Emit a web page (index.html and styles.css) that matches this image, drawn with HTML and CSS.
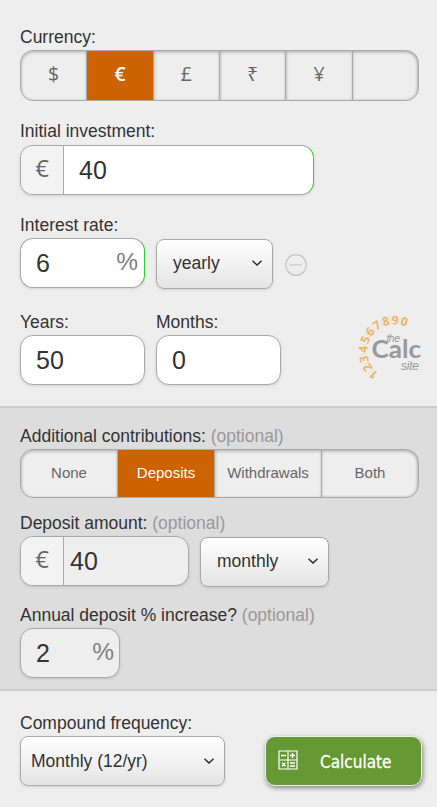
FILE: index.html
```html
<!DOCTYPE html>
<html lang="en">
<head>
  <meta charset="UTF-8" />
  <meta name="viewport" content="width=device-width, initial-scale=1.0"/>
  <title>Compound Interest Calculator</title>
  <link rel="stylesheet" href="styles.css">
</head>
<body>

<form class="calculator">

  <!-- Main figures -->
  <section class="panel panel-main">
    <div class="field currency-field">
      <div class="label">Currency:</div>
      <div class="switch currency">
        <button type="button">$</button>
        <button type="button" class="active">€</button>
        <button type="button">£</button>
        <button type="button">₹</button>
        <button type="button">¥</button>
        <button type="button"></button>
      </div>
    </div>

    <div class="field initial-field">
      <label class="label" for="initial">Initial investment:</label>
      <div class="input-box valid initial">
        <span class="prefix">€</span>
        <input id="initial" type="text" value="40">
      </div>
    </div>

    <div class="field rate-field">
      <label class="label" for="rate">Interest rate:</label>
      <div class="row">
        <div class="input-box valid rate">
          <input id="rate" type="text" value="6">
          <span class="suffix">%</span>
        </div>
        <div class="select-box rate-period">
          <span>yearly</span>
          <svg class="chevron" viewBox="0 0 12 8"><path d="M1.5 1.7 L6 6 L10.5 1.7"/></svg>
        </div>
        <svg class="minus" viewBox="0 0 22 22"><circle cx="11" cy="11" r="10.3"/><path d="M4.5 11 H16.5"/></svg>
      </div>
    </div>

    <div class="row length-row">
      <div class="field">
        <label class="label" for="years">Years:</label>
        <div class="input-box years"><input id="years" type="text" value="50"></div>
      </div>
      <div class="field">
        <label class="label" for="months">Months:</label>
        <div class="input-box months"><input id="months" type="text" value="0"></div>
      </div>
      <svg class="logo" viewBox="8 8 66 68">
        <g class="logo-digits" transform="translate(44.6 47.5)">
          <text transform="rotate(-138)" y="-27.3">1</text>
          <text transform="rotate(-121)" y="-27.3">2</text>
          <text transform="rotate(-104)" y="-27.3">3</text>
          <text transform="rotate(-86)" y="-27.3">4</text>
          <text transform="rotate(-68)" y="-27.3">5</text>
          <text transform="rotate(-51)" y="-27.3">6</text>
          <text transform="rotate(-34)" y="-27.3">7</text>
          <text transform="rotate(-16)" y="-27.3">8</text>
          <text transform="rotate(1)" y="-27.3">9</text>
          <text transform="rotate(18)" y="-27.3">0</text>
        </g>
        <g class="logo-ticks" transform="translate(44.6 47.5)">
          <path transform="rotate(-129.5)" d="M0 -27 V-35"/>
          <path transform="rotate(-112.5)" d="M0 -27 V-35"/>
          <path transform="rotate(-95)" d="M0 -27 V-35"/>
          <path transform="rotate(-77)" d="M0 -27 V-35"/>
          <path transform="rotate(-59.5)" d="M0 -27 V-35"/>
          <path transform="rotate(-42.5)" d="M0 -27 V-35"/>
          <path transform="rotate(-25)" d="M0 -27 V-35"/>
          <path transform="rotate(-7.5)" d="M0 -27 V-35"/>
          <path transform="rotate(9.5)" d="M0 -27 V-35"/>
        </g>
        <text class="logo-small" x="36.5" y="37.8" font-size="10.5" textLength="13.5">the</text>
        <text class="logo-big" x="21.5" y="54.3" textLength="49.5" lengthAdjust="spacingAndGlyphs">Calc</text>
        <text class="logo-small" x="51" y="65.5" font-size="12" textLength="18">site</text>
      </svg>
    </div>
  </section>

  <!-- Regular contributions -->
  <section class="panel panel-extra">
    <div class="field">
      <div class="label">Additional contributions: <span class="optional">(optional)</span></div>
      <div class="switch contributions">
        <button type="button">None</button>
        <button type="button" class="active">Deposits</button>
        <button type="button">Withdrawals</button>
        <button type="button">Both</button>
      </div>
    </div>

    <div class="field deposit-field">
      <label class="label" for="deposit">Deposit amount: <span class="optional">(optional)</span></label>
      <div class="row">
        <div class="input-box deposit">
          <span class="prefix">€</span>
          <input id="deposit" type="text" value="40">
        </div>
        <div class="select-box deposit-period">
          <span>monthly</span>
          <svg class="chevron" viewBox="0 0 12 8"><path d="M1.5 1.7 L6 6 L10.5 1.7"/></svg>
        </div>
      </div>
    </div>

    <div class="field increase-field">
      <label class="label" for="increase">Annual deposit % increase? <span class="optional">(optional)</span></label>
      <div class="input-box increase">
        <input id="increase" type="text" value="2">
        <span class="suffix">%</span>
      </div>
    </div>
  </section>

  <!-- Compounding and submit -->
  <section class="panel panel-submit">
    <div class="field">
      <div class="label">Compound frequency:</div>
      <div class="select-box frequency">
        <span>Monthly (12/yr)</span>
        <svg class="chevron" viewBox="0 0 12 8"><path d="M1.5 1.7 L6 6 L10.5 1.7"/></svg>
      </div>
    </div>
    <button type="button" class="calculate">
      <svg viewBox="0 0 20 20">
        <path class="frame" d="M1 1 H19 V19 H1 Z M10 1 V19 M1 10 H19"/>
        <path class="signs" d="M3 5.5 H8 M12 5.5 H17 M14.5 3 V8 M4 12.7 L7.4 16.1 M7.4 12.7 L4 16.1 M12 13 H17 M12 16 H17"/>
      </svg>
      <span>Calculate</span>
    </button>
  </section>

</form>

</body>
</html>
```
FILE: styles.css
```css
* {
  box-sizing: border-box;
}
body {
  margin: 0;
  font-family: Arial, "Liberation Sans", sans-serif;
  font-size: 17.5px;
  color: #333;
  background: #eee;
}
button, input {
  font-family: inherit;
  margin: 0;
}
.panel {
  padding: 0 18px 0 20px;
}
.panel-main {
  height: 406px;
  padding-top: 25px;
}
.panel-extra {
  height: 285px;
  padding-top: 16px;
  background: #ddd;
  border-top: 2px solid #ccc;
  border-bottom: 2px solid #ccc;
}
.panel-submit {
  display: flex;
  justify-content: space-between;
  align-items: flex-end;
  height: 116px;
  padding-right: 15px;
  padding-bottom: 21px;
}
.label {
  display: block;
  line-height: 24px;
  margin-bottom: 1px;
  white-space: nowrap;
}
.optional {
  color: #999;
}
.row {
  display: flex;
}

/* Button groups */
.switch {
  display: flex;
  height: 51px;
  border: 1px solid #aaa;
  border-radius: 13px;
  overflow: hidden;
  background: #eee;
}
.switch button {
  flex: 1 1 0;
  padding: 0 0 3px;
  border: none;
  border-left: 1px solid #aaa;
  background: none;
  color: #666;
  font-size: 15px;
  box-shadow: inset 0 2px 3px rgba(0,0,0,0.16), inset 1px 0 3px rgba(0,0,0,0.12);
}
.switch button:first-child {
  border-left: none;
  border-radius: 12px 0 0 12px;
}
.switch button:last-child {
  border-radius: 0 12px 12px 0;
  box-shadow: inset 0 2px 3px rgba(0,0,0,0.16), inset -1px 0 3px rgba(0,0,0,0.2);
}
.switch .active {
  background: #cc6200;
  color: #fff;
  box-shadow: none;
}
.currency {
  margin-top: 1px;
}
.currency button {
  padding-bottom: 4px;
  font-family: "Open Sans", "Noto Sans", sans-serif;
  font-size: 19.5px;
}
.currency .active {
  font-weight: 600;
}
.contributions {
  height: 49px;
}
.contributions button {
  flex: 0 0 97px;
}
.contributions button:first-child {
  flex-basis: 96px;
}
.contributions button:nth-child(3) {
  flex-basis: 107px;
}
.contributions button:last-child {
  flex: 1;
}

/* Inputs */
.input-box {
  position: relative;
  display: flex;
  height: 50px;
  border: 1px solid #aaa;
  border-radius: 13px;
  overflow: hidden;
  background: #fff;
  box-shadow: 0 1px 3px rgba(0,0,0,0.13);
}
.input-box input {
  flex: 1;
  min-width: 0;
  padding: 0 0 0 15px;
  border: none;
  background: none;
  color: #333;
  font-size: 25px;
}
.valid {
  border-right-color: #3c3;
}
.prefix {
  flex: 0 0 43px;
  padding-top: 3px;
  border-right: 1px solid #aaa;
  background: #f3f3f3;
  color: #666;
  font: 24px/38px "Open Sans", "Noto Sans", sans-serif;
  text-align: center;
}
.suffix {
  position: absolute;
  top: 0;
  right: 6px;
  line-height: 46px;
  font-size: 24.5px;
  color: #808080;
}
.panel-extra .input-box {
  background: #eee;
}
.initial-field {
  margin-top: 18px;
}
.initial-field .label {
  margin-bottom: 2px;
}
.initial {
  width: 294px;
}
.rate-field {
  margin-top: 18px;
}
.rate, .years, .months {
  width: 125px;
}
.length-row {
  margin-top: 21px;
}
.length-row .field {
  flex: none;
  width: 125px;
  margin-right: 11px;
}
.deposit-field {
  margin-top: 13px;
}
.deposit {
  width: 169px;
}
.deposit input {
  padding-left: 6px;
}
.increase-field {
  margin-top: 16px;
}
.increase {
  width: 100px;
}
.increase .suffix {
  right: 5px;
}

/* Dropdowns */
.select-box {
  display: flex;
  align-items: center;
  justify-content: space-between;
  height: 50px;
  margin-top: 1px;
  padding: 0 9px 1px 16px;
  border: 1px solid #aaa;
  border-radius: 8px;
  background: linear-gradient(#fff, #e4e4e4);
  box-shadow: 0 1px 3px rgba(0,0,0,0.13);
}
.chevron {
  width: 12px;
  height: 8px;
  margin-bottom: 1px;
  fill: none;
  stroke: #222;
  stroke-width: 1.3;
}
.rate-period {
  width: 117px;
  margin-left: 11px;
}
.deposit-period {
  width: 129px;
  margin-left: 11px;
}
.frequency {
  width: 205px;
  margin-top: 0;
  padding-bottom: 0;
  padding-left: 10px;
}
.minus {
  width: 22px;
  height: 22px;
  margin: 16px 0 0 12px;
  fill: none;
  stroke: #c4c4c4;
  stroke-width: 1.2;
}

/* Logo */
.logo {
  flex: none;
  width: 66px;
  height: 68px;
  margin: 2px -10px 0 66px;
  overflow: visible;
}
.logo-digits {
  font: bold 12px "Open Sans", sans-serif;
  text-anchor: middle;
  fill: #f0b467;
}
.logo-ticks {
  stroke: #f3d5ae;
  stroke-width: 0.6;
}
.logo-small {
  font-family: Arial, "Liberation Sans", sans-serif;
  font-style: italic;
  fill: #999;
}
.logo-big {
  font: bold 24px Lato, sans-serif;
  fill: #999;
}

/* Submit */
.calculate {
  display: flex;
  align-items: center;
  width: 157px;
  height: 50px;
  padding: 0 0 0 12px;
  border: 1px solid #eee;
  border-radius: 10px;
  background: #693;
  color: #fff;
  box-shadow: 1px 2px 5px rgba(0,0,0,0.45);
}
.calculate svg {
  width: 20px;
  height: 20px;
  margin: 0 22px 2px 0;
  fill: none;
  stroke: #fff;
}
.calculate .frame {
  stroke-width: 1.2;
}
.calculate .signs {
  stroke-width: 1.5;
}
.calculate span {
  padding-top: 1px;
  font: 17px "DejaVu Sans Condensed", "DejaVu Sans", sans-serif;
  -webkit-text-stroke: 0.3px #fff;
}
```
